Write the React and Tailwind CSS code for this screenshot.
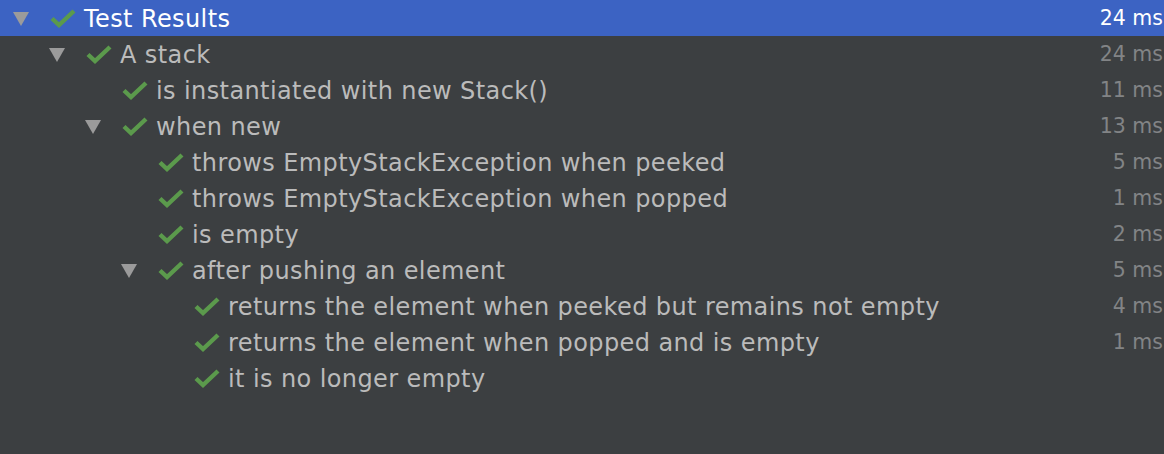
const rows = [
  { level: 0, label: 'Test Results', time: '24 ms', open: true, selected: true },
  { level: 1, label: 'A stack', time: '24 ms', open: true },
  { level: 2, label: 'is instantiated with new Stack()', time: '11 ms' },
  { level: 2, label: 'when new', time: '13 ms', open: true },
  { level: 3, label: 'throws EmptyStackException when peeked', time: '5 ms' },
  { level: 3, label: 'throws EmptyStackException when popped', time: '1 ms' },
  { level: 3, label: 'is empty', time: '2 ms' },
  { level: 3, label: 'after pushing an element', time: '5 ms', open: true },
  { level: 4, label: 'returns the element when peeked but remains not empty', time: '4 ms' },
  { level: 4, label: 'returns the element when popped and is empty', time: '1 ms' },
  { level: 4, label: 'it is no longer empty', time: '' },
];

const INDENT = ['pl-[12px]', 'pl-[48px]', 'pl-[84px]', 'pl-[120px]', 'pl-[156px]'];

const Check = () => (
  <svg width="26" height="20" viewBox="0 0 26 20" className="shrink-0">
    <path d="M2 10.5 L9 17 L24 3" fill="none" stroke="#5b9a4c" strokeWidth="4.4" strokeLinecap="butt" strokeLinejoin="miter" />
  </svg>
);

const Arrow = () => (
  <svg width="18" height="16" viewBox="0 0 18 16" className="shrink-0">
    <path d="M1 1 H17 L9 15 Z" fill="#9b9b9b" />
  </svg>
);

const Row = ({ row }) => (
  <div
    className={`flex items-center h-[36px] pr-[1px] ${INDENT[row.level]} ${
      row.selected ? 'bg-[#3c63c3] text-white' : 'text-[#bbbbbb]'
    }`}
  >
    <div className="w-[36px] flex items-center justify-start pt-[2px]">
      {row.open && <Arrow />}
    </div>
    <div className="ml-[2px] mr-[8px] flex items-center">
      <Check />
    </div>
    <span className="flex-1 text-[24px] tracking-[0.4px] leading-none whitespace-nowrap pt-[1px]">{row.label}</span>
    <span className={`text-[20.5px] leading-none ${row.selected ? 'text-white' : 'text-[#828486]'}`}>
      {row.time}
    </span>
  </div>
);

export default function App() {
  return (
    <div
      className="w-[1164px] h-[454px] bg-[#3c3f41] overflow-hidden"
      style={{ fontFamily: '"DejaVu Sans", "Open Sans", sans-serif' }}
    >
      {rows.map((r, i) => (
        <Row key={i} row={r} />
      ))}
    </div>
  );
}
